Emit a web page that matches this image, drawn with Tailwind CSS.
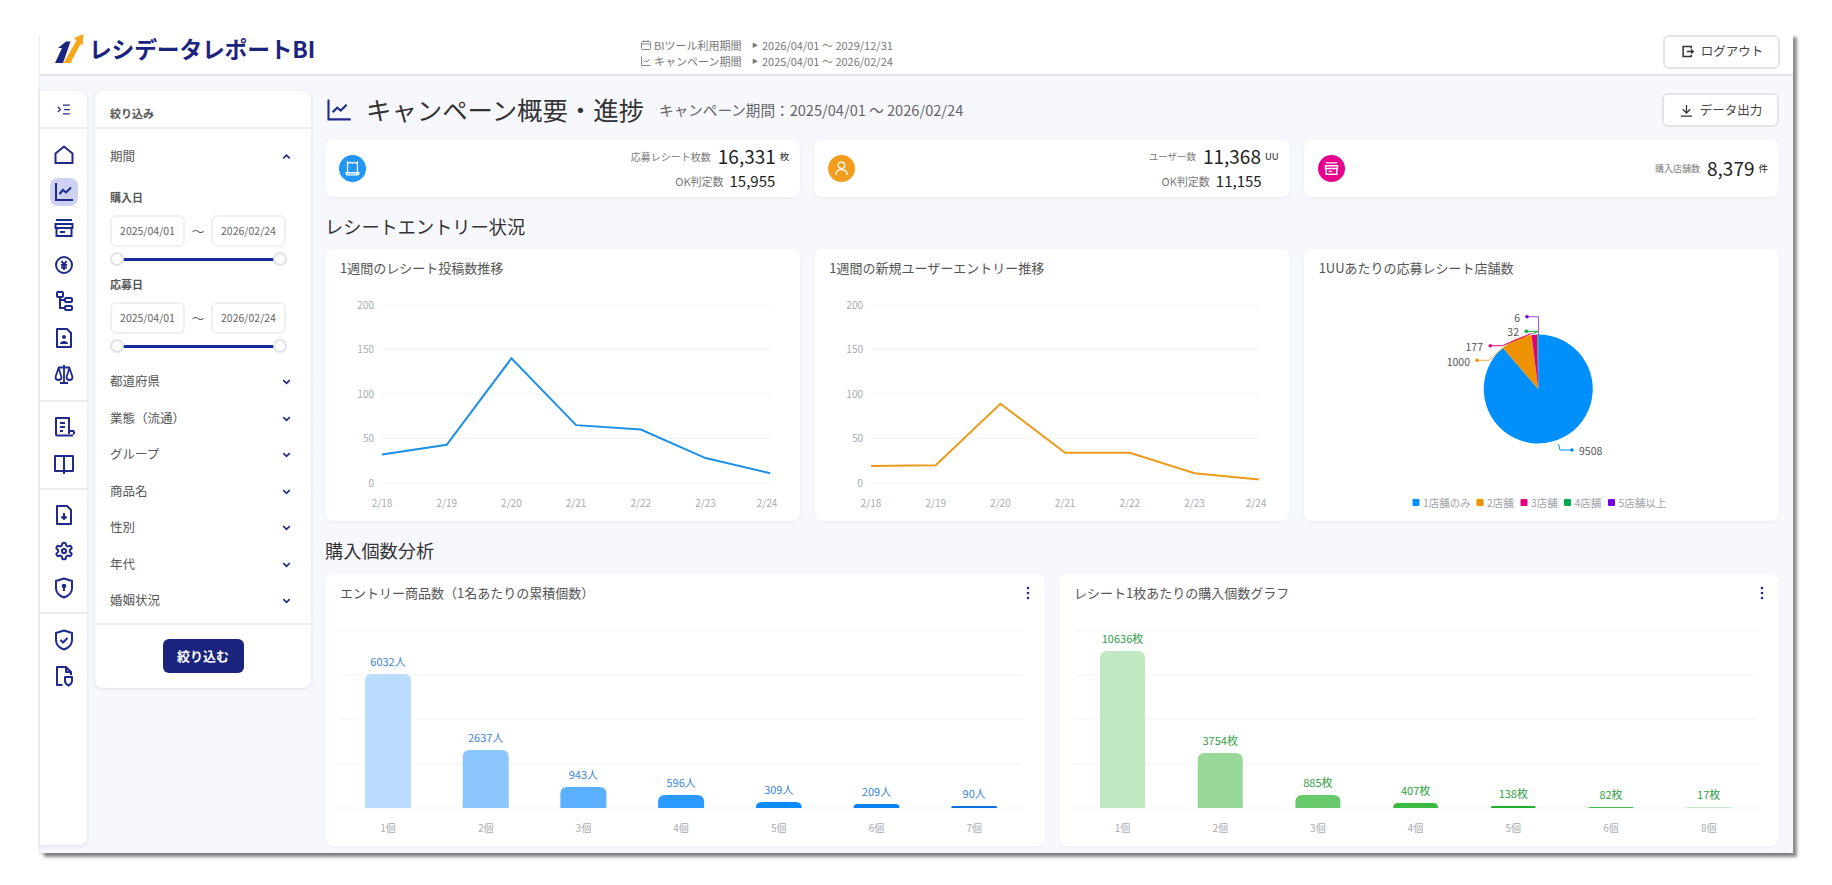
<!DOCTYPE html>
<html lang="ja">
<head>
  <meta charset="UTF-8" />
  <title>レシデータレポートBI</title>
  <script src="https://cdn.jsdelivr.net/npm/@tailwindcss/browser@4"></script>
</head>
<body class="bg-white font-['Noto_Sans_CJK_JP','Noto_Sans',sans-serif] text-[#333]">
 <div class="h-[885px] pt-[33px] pl-[40px]">

  <div class="w-[1753px] h-[820px] bg-[#f7f8fd] flex flex-col shadow-[4px_4px_3px_rgba(0,0,0,0.45),-1px_2px_2px_rgba(0,0,0,0.1)]">

    <!-- header -->
    <header class="h-[43px] shrink-0 bg-white border-b-2 border-[#e4e5ea] flex items-center pl-[15px] pr-[13px]">
      <div class="w-[585px] mb-[9px] flex items-center gap-[4px]">
        <svg class="w-[30px] h-[30px]" viewBox="0 0 30 30"><polygon points="0,29 8,29 15.5,7.5 11,7.5 3,14 7,14" fill="#1a237e"/><polygon points="8.5,29 15.5,29 25.5,10 27.5,12 28.5,0 19,4 21.5,6.5" fill="#f5a81c"/></svg>
        <span class="text-[22.8px] leading-none font-bold text-[#1a237e] tracking-[-0.2px]">レシデータレポートBI</span>
      </div>
      <div class="mb-[2px] text-[11px] leading-[16px] text-[#777] grid grid-cols-[14px_98px_10px_auto] items-center">
        <svg class="w-[12px] h-[12px]" viewBox="0 0 24 24" fill="none" stroke="#888" stroke-width="2"><rect x="3" y="5" width="18" height="16" rx="2"/><path d="M3 10h18M8 2v4M16 2v4"/></svg>
        <span>BIツール利用期間</span><span class="text-[6px]">▶</span><span>2026/04/01 ～ 2029/12/31</span>
        <svg class="w-[12px] h-[12px]" viewBox="0 0 24 24" fill="none" stroke="#888" stroke-width="2"><path d="M3 3v18h18M7 15l4-4 3 3 5-6"/></svg>
        <span>キャンペーン期間</span><span class="text-[6px]">▶</span><span>2025/04/01 ～ 2026/02/24</span>
      </div>
      <button class="ml-auto mb-[4px] w-[117px] h-[34px] bg-white border-2 border-[#e2e4ec] rounded-md flex items-center justify-center gap-[6px] text-[12.5px] text-[#444]">
        <svg class="w-[15px] h-[15px]" viewBox="0 0 24 24" fill="none" stroke="#333" stroke-width="2.4"><path d="M18 7V4H5v16h13v-3M11 12h10M18 9l3 3-3 3"/></svg>ログアウト
      </button>
    </header>

    <div class="flex pt-[15px]">
      <!-- icon rail -->
      <aside class="w-[47px] h-[754px] shrink-0 bg-white rounded-r-lg shadow-[0_1px_4px_rgba(30,40,120,0.12)] flex flex-col items-center text-[#1f2a8c]">
        <div class="w-full h-[38px] flex items-center justify-center border-b-2 border-[#ececf1]">
          <svg class="w-[15px] h-[15px]" viewBox="0 0 24 24" fill="none" stroke="currentColor" stroke-width="2"><path d="M3 8l4 4-4 4M11 5h11M13 12h9M11 19h11"/></svg>
        </div>
        <div class="flex flex-col items-center gap-[12.5px] pt-[14px]">
          <svg class="w-[24px] h-[24px]" viewBox="0 0 24 24" fill="none" stroke="currentColor" stroke-width="2" stroke-linejoin="round"><path d="M3.500 10.500L12 3.500l8.500 7V20h-17z"/></svg>
          <div class="w-[28px] h-[28px] -my-[2px] bg-[#cdd1f4] rounded-lg flex items-center justify-center">
            <svg class="w-[24px] h-[24px]" viewBox="0 0 24 24" fill="none" stroke="currentColor" stroke-width="2"><path d="M4 3v17h17M7.500 14l3.500-4 3 2.500 5-5"/></svg>
          </div>
          <svg class="w-[24px] h-[24px]" viewBox="0 0 24 24" fill="none" stroke="currentColor" stroke-width="2"><path d="M4 4h16M3.500 8h17v4h-17zM4.500 12v8h15v-8M8 16h5"/></svg>
          <svg class="w-[24px] h-[24px]" viewBox="0 0 24 24" fill="none" stroke="currentColor" stroke-width="2"><circle cx="12" cy="12" r="8"/><path d="M9.500 8l2.500 3.500L14.500 8M9 12h6M9 14.500h6M12 11.500V17"/></svg>
          <svg class="w-[24px] h-[24px]" viewBox="0 0 24 24" fill="none" stroke="currentColor" stroke-width="2"><rect x="5" y="3" width="6" height="5" rx="1"/><rect x="13" y="9" width="7" height="4" rx="1"/><rect x="13" y="17" width="7" height="4" rx="1"/><path d="M8 8v11h5M8 11h5"/></svg>
          <svg class="w-[24px] h-[24px]" viewBox="0 0 24 24" fill="none" stroke="currentColor" stroke-width="2" stroke-linejoin="round"><path d="M5 3h10l4 4v14H5z"/><circle cx="12" cy="11" r="2" fill="currentColor" stroke="none"/><path d="M8 18c0-2 2-3 4-3s4 1 4 3z" fill="currentColor" stroke="none"/></svg>
          <svg class="w-[24px] h-[24px]" viewBox="0 0 24 24" fill="none" stroke="currentColor" stroke-width="1.800" stroke-linejoin="round"><path d="M12 3v17M8 21h8M6 5.500h12M6.500 6L3.500 15a3 3 0 0 0 6 0zM17.500 6l-3 9a3 3 0 0 0 6 0z"/></svg>
        </div>
        <div class="w-full h-[2px] bg-[#ececf1] mt-[14px]"></div>
        <div class="flex flex-col items-center gap-[12.5px] pt-[13px]">
          <svg class="w-[24px] h-[24px]" viewBox="0 0 24 24" fill="none" stroke="currentColor" stroke-width="2" stroke-linejoin="round"><path d="M21 20.500H5a1 1 0 0 1-1-1V3h13v16M8 8h5M8 12h5M8 16h3M17 16h3a1.500 1.500 0 0 1 1 3"/></svg>
          <svg class="w-[24px] h-[24px]" viewBox="0 0 24 24" fill="none" stroke="currentColor" stroke-width="2" stroke-linejoin="round"><path d="M3 4h18v15H3zM12 4v18"/></svg>
        </div>
        <div class="w-full h-[2px] bg-[#ececf1] mt-[12px]"></div>
        <div class="flex flex-col items-center gap-[12.5px] pt-[13px]">
          <svg class="w-[24px] h-[24px]" viewBox="0 0 24 24" fill="none" stroke="currentColor" stroke-width="2" stroke-linejoin="round"><path d="M5 3h10l4 4v14H5zM12 10v6M9.500 13.500L12 16l2.500-2.500"/></svg>
          <svg class="w-[24px] h-[24px] p-[2px]" viewBox="0 0 24 24" fill="none" stroke="currentColor" stroke-width="2.400"><path d="M12.220 2h-.44a2 2 0 0 0-2 2v.18a2 2 0 0 1-1 1.730l-.43.25a2 2 0 0 1-2 0l-.15-.08a2 2 0 0 0-2.730.73l-.22.38a2 2 0 0 0 .73 2.730l.15.1a2 2 0 0 1 1 1.720v.51a2 2 0 0 1-1 1.740l-.15.09a2 2 0 0 0-.73 2.730l.22.38a2 2 0 0 0 2.730.73l.15-.08a2 2 0 0 1 2 0l.43.25a2 2 0 0 1 1 1.730V20a2 2 0 0 0 2 2h.44a2 2 0 0 0 2-2v-.18a2 2 0 0 1 1-1.730l.43-.25a2 2 0 0 1 2 0l.15.08a2 2 0 0 0 2.730-.73l.22-.39a2 2 0 0 0-.73-2.730l-.15-.08a2 2 0 0 1-1-1.740v-.5a2 2 0 0 1 1-1.740l.15-.09a2 2 0 0 0 .73-2.730l-.22-.38a2 2 0 0 0-2.730-.73l-.15.08a2 2 0 0 1-2 0l-.43-.25a2 2 0 0 1-1-1.730V4a2 2 0 0 0-2-2z"/><circle cx="12" cy="12" r="2.500"/></svg>
          <svg class="w-[24px] h-[24px]" viewBox="0 0 24 24" fill="none" stroke="currentColor" stroke-width="2" stroke-linejoin="round"><path d="M12 2.500L4 5v7c0 5 3.500 8 8 9.500 4.500-1.500 8-4.500 8-9.500V5z"/><circle cx="12" cy="10" r="1.300" fill="currentColor"/><path d="M12 11v4"/></svg>
        </div>
        <div class="w-full h-[2px] bg-[#ececf1] mt-[12px]"></div>
        <div class="flex flex-col items-center gap-[12.5px] pt-[14px]">
          <svg class="w-[24px] h-[24px]" viewBox="0 0 24 24" fill="none" stroke="currentColor" stroke-width="2" stroke-linejoin="round"><path d="M12 2.500L4 5v7c0 5 3.500 8 8 9.500 4.500-1.500 8-4.500 8-9.500V5z"/><path d="M8.500 12l2.500 2.500 4.500-4.500"/></svg>
          <svg class="w-[24px] h-[24px]" viewBox="0 0 24 24" fill="none" stroke="currentColor" stroke-width="2" stroke-linejoin="round"><path d="M10.500 21H5V3h9l5 5v3M14 3v5h5M13 13h7v4c0 2.500-1.500 3.500-3.500 4.500-2-1-3.500-2-3.500-4.500z"/></svg>
        </div>
      </aside>

      <!-- filter panel -->
      <aside class="ml-[8px] w-[216px] h-[597px] shrink-0 bg-white rounded-lg shadow-[0_1px_4px_rgba(30,40,120,0.12)] flex flex-col text-[#555]">
        <div class="h-[38px] px-[15px] flex items-end pb-[6px] border-b-2 border-[#ececf1] text-[11px] font-bold leading-[16px]">絞り込み</div>
        <div class="px-[15px]">
          <div class="h-[54px] flex items-center justify-between pr-[4px] text-[12.5px]">
            <span>期間</span>
            <svg class="w-[11px] h-[11px]" viewBox="0 0 24 24" fill="none" stroke="#1f2a8c" stroke-width="3.500"><path d="M5 16l7-7 7 7"/></svg>
          </div>
          <div class="text-[11px] font-bold leading-[16px] mt-[6px]">購入日</div>
          <div class="flex items-center justify-between w-[176px] mt-[10px] text-[10.5px] text-[#666]">
            <div class="w-[75px] h-[32px] border-2 border-[#eef0f4] rounded-md flex items-center justify-center">2025/04/01</div>
            <span class="text-[13px]">～</span>
            <div class="w-[75px] h-[32px] border-2 border-[#eef0f4] rounded-md flex items-center justify-center">2026/02/24</div>
          </div>
          <div class="relative w-[177px] h-[14px] mt-[5px] flex items-center px-[7px]">
            <div class="w-full h-[3px] bg-[#1a2a9c]"></div>
            <div class="absolute left-0 top-0 w-[14px] h-[14px] rounded-full bg-white border-2 border-[#dfe2e8]"></div>
            <div class="absolute right-0 top-0 w-[14px] h-[14px] rounded-full bg-white border-2 border-[#dfe2e8]"></div>
          </div>
          <div class="text-[11px] font-bold leading-[16px] mt-[10px]">応募日</div>
          <div class="flex items-center justify-between w-[176px] mt-[10px] text-[10.5px] text-[#666]">
            <div class="w-[75px] h-[32px] border-2 border-[#eef0f4] rounded-md flex items-center justify-center">2025/04/01</div>
            <span class="text-[13px]">～</span>
            <div class="w-[75px] h-[32px] border-2 border-[#eef0f4] rounded-md flex items-center justify-center">2026/02/24</div>
          </div>
          <div class="relative w-[177px] h-[14px] mt-[5px] flex items-center px-[7px]">
            <div class="w-full h-[3px] bg-[#1a2a9c]"></div>
            <div class="absolute left-0 top-0 w-[14px] h-[14px] rounded-full bg-white border-2 border-[#dfe2e8]"></div>
            <div class="absolute right-0 top-0 w-[14px] h-[14px] rounded-full bg-white border-2 border-[#dfe2e8]"></div>
          </div>
          <div class="mt-[10.5px] text-[12.5px]">
            <div class="h-[36.5px] flex items-center justify-between pr-[4px]"><span>都道府県</span><svg class="w-[11px] h-[11px]" viewBox="0 0 24 24" fill="none" stroke="#1f2a8c" stroke-width="3.500"><path d="M5 9l7 7 7-7"/></svg></div>
            <div class="h-[36.5px] flex items-center justify-between pr-[4px]"><span>業態（流通）</span><svg class="w-[11px] h-[11px]" viewBox="0 0 24 24" fill="none" stroke="#1f2a8c" stroke-width="3.500"><path d="M5 9l7 7 7-7"/></svg></div>
            <div class="h-[36.5px] flex items-center justify-between pr-[4px]"><span>グループ</span><svg class="w-[11px] h-[11px]" viewBox="0 0 24 24" fill="none" stroke="#1f2a8c" stroke-width="3.500"><path d="M5 9l7 7 7-7"/></svg></div>
            <div class="h-[36.5px] flex items-center justify-between pr-[4px]"><span>商品名</span><svg class="w-[11px] h-[11px]" viewBox="0 0 24 24" fill="none" stroke="#1f2a8c" stroke-width="3.500"><path d="M5 9l7 7 7-7"/></svg></div>
            <div class="h-[36.5px] flex items-center justify-between pr-[4px]"><span>性別</span><svg class="w-[11px] h-[11px]" viewBox="0 0 24 24" fill="none" stroke="#1f2a8c" stroke-width="3.500"><path d="M5 9l7 7 7-7"/></svg></div>
            <div class="h-[36.5px] flex items-center justify-between pr-[4px]"><span>年代</span><svg class="w-[11px] h-[11px]" viewBox="0 0 24 24" fill="none" stroke="#1f2a8c" stroke-width="3.500"><path d="M5 9l7 7 7-7"/></svg></div>
            <div class="h-[36.5px] flex items-center justify-between pr-[4px]"><span>婚姻状況</span><svg class="w-[11px] h-[11px]" viewBox="0 0 24 24" fill="none" stroke="#1f2a8c" stroke-width="3.500"><path d="M5 9l7 7 7-7"/></svg></div>
          </div>
        </div>
        <div class="mt-[4px] border-t-2 border-[#ececf1] flex justify-center pt-[14px]">
          <button class="w-[81px] h-[34px] bg-[#1a237e] rounded-md text-white text-[13px] font-bold">絞り込む</button>
        </div>
      </aside>

      <!-- main -->
      <main class="ml-[14px] w-[1454px]">
        <div class="h-[49px] flex items-start">
          <div class="h-[38px] flex items-center">
            <svg class="w-[28px] h-[28px]" viewBox="0 0 24 24" fill="none" stroke="#1f2a8c" stroke-width="1.800"><path d="M3 3v17h19M6.500 14l4-4 3 2.500 5-5"/></svg>
            <h1 class="ml-[13px] text-[25.4px] leading-none font-normal text-[#333]">キャンペーン概要・進捗</h1>
            <span class="ml-[15px] text-[14.6px] text-[#666]">キャンペーン期間：2025/04/01 ～ 2026/02/24</span>
          </div>
          <button class="ml-auto mt-[2px] w-[117px] h-[34px] bg-white border-2 border-[#e2e4ec] rounded-md flex items-center justify-center gap-[6px] text-[12.5px] text-[#444]">
            <svg class="w-[15px] h-[15px]" viewBox="0 0 24 24" fill="none" stroke="#333" stroke-width="2"><path d="M12 3v12M6 10l6 6 6-6M3 21h18"/></svg>データ出力
          </button>
        </div>

        <!-- KPI cards -->
        <div class="grid grid-cols-3 gap-[14px] h-[57px]">
          <div class="bg-white rounded-lg shadow-[0_1px_3px_rgba(30,40,120,0.06)] flex items-center justify-between pl-[14px] pr-[11px]">
            <div class="w-[27px] h-[27px] rounded-full bg-[#2196f3] flex items-center justify-center">
              <svg class="w-[17px] h-[17px]" viewBox="0 0 24 24" fill="none" stroke="#fff" stroke-width="1.800"><path d="M5 3l2 1.500L9.500 3 12 4.500 14.500 3 17 4.500 19 3v15H5zM3 18h15v3H5a2 2 0 0 1-2-2zM18 18h3v1a2 2 0 0 1-2 2"/></svg>
            </div>
            <div class="flex flex-col items-end text-[#222]">
              <div class="flex items-center h-[26px]"><span class="text-[10px] text-[#777] mr-[7px]">応募レシート枚数</span><span class="text-[19px]">16,331</span><span class="text-[9.5px] ml-[4px]">枚</span></div>
              <div class="flex items-center h-[24px] pr-[14px]"><span class="text-[11px] text-[#777] mr-[6px]">OK判定数</span><span class="text-[15px]">15,955</span></div>
            </div>
          </div>
          <div class="bg-white rounded-lg shadow-[0_1px_3px_rgba(30,40,120,0.06)] flex items-center justify-between pl-[14px] pr-[11px]">
            <div class="w-[27px] h-[27px] rounded-full bg-[#f39c1f] flex items-center justify-center">
              <svg class="w-[17px] h-[17px]" viewBox="0 0 24 24" fill="none" stroke="#fff" stroke-width="1.800"><circle cx="12" cy="7.500" r="4.500"/><path d="M4 21c0-5 3.500-7.500 8-7.500s8 2.500 8 7.500"/></svg>
            </div>
            <div class="flex flex-col items-end text-[#222]">
              <div class="flex items-center h-[26px]"><span class="text-[9.5px] text-[#777] mr-[7px]">ユーザー数</span><span class="text-[19px]">11,368</span><span class="text-[9.5px] ml-[4px]">UU</span></div>
              <div class="flex items-center h-[24px] pr-[17px]"><span class="text-[11px] text-[#777] mr-[6px]">OK判定数</span><span class="text-[15px]">11,155</span></div>
            </div>
          </div>
          <div class="bg-white rounded-lg shadow-[0_1px_3px_rgba(30,40,120,0.06)] flex items-center justify-between pl-[14px] pr-[11px]">
            <div class="w-[27px] h-[27px] rounded-full bg-[#e6008c] flex items-center justify-center">
              <svg class="w-[17px] h-[17px]" viewBox="0 0 24 24" fill="none" stroke="#fff" stroke-width="2"><path d="M4 4h16M3.500 8h17v4h-17zM4.500 12v8h15v-8M8 16h5"/></svg>
            </div>
            <div class="flex items-center text-[#222]"><span class="text-[9px] text-[#777] mr-[7px]">購入店舗数</span><span class="text-[19px]">8,379</span><span class="text-[9.5px] ml-[4px]">件</span></div>
          </div>
        </div>

        <h2 class="h-[52px] flex items-center pt-[7px] text-[18.2px] font-normal text-[#333]">レシートエントリー状況</h2>
        <div class="grid grid-cols-3 gap-[14px] h-[272px]">
          <section class="bg-white rounded-lg shadow-[0_1px_3px_rgba(30,40,120,0.06)]">
            <h3 class="h-[37px] flex items-center px-[15px] text-[13px] font-normal text-[#555]">1週間のレシート投稿数推移</h3>
            <svg id="line1" class="block w-[475px] h-[235px]" viewBox="325 286 475 235"></svg>
          </section>
          <section class="bg-white rounded-lg shadow-[0_1px_3px_rgba(30,40,120,0.06)]">
            <h3 class="h-[37px] flex items-center px-[15px] text-[13px] font-normal text-[#555]">1週間の新規ユーザーエントリー推移</h3>
            <svg id="line2" class="block w-[475px] h-[235px]" viewBox="814 286 475 235"></svg>
          </section>
          <section class="bg-white rounded-lg shadow-[0_1px_3px_rgba(30,40,120,0.06)]">
            <h3 class="h-[37px] flex items-center px-[15px] text-[13px] font-normal text-[#555]">1UUあたりの応募レシート店舗数</h3>
            <svg class="block w-[475px] h-[235px]" viewBox="1304 286 475 235" font-size="10.500">
              <g transform="translate(1538.300 389)">
                <path d="M0 0L-35.600 -41.300A54.500 54.500 0 1 0 0 -54.500z" fill="#008ffb"/>
                <path d="M0 0L-6.800 -54.070A54.500 54.500 0 0 0 -35.600 -41.300z" fill="#ee9200"/>
                <path d="M0 0L-1.200 -54.490A54.500 54.500 0 0 0 -6.800 -54.070z" fill="#e0007f"/>
                <path d="M0 0L-0.200 -54.500A54.500 54.500 0 0 0 -1.200 -54.490z" fill="#00a84f"/>
                <path d="M0 0L0 -54.500A54.500 54.500 0 0 0 -0.200 -54.500z" fill="#7a00e0"/>
              </g>
              <g fill="none" stroke-width="1">
                <path d="M1526.300 331.300h12l-6 2.500" stroke="#12a82a"/>
                <path d="M1527 316.700h11.500v18" stroke="#a64de8"/>
                <path d="M1477 360.300h12l13.300 -12l14 -10" stroke="#f5b04a"/>
                <path d="M1490.300 345.700h12l29.500 -12.500" stroke="#e0007f"/>
                <path d="M1572 450h-12l-1.500 -6" stroke="#008ffb"/>
              </g>
              <circle cx="1527" cy="316.700" r="1.800" fill="#7a00e0"/><circle cx="1526.300" cy="331.300" r="1.800" fill="#00a84f"/><circle cx="1490.300" cy="345.700" r="1.800" fill="#e0007f"/><circle cx="1477" cy="360.300" r="1.800" fill="#ee9200"/><circle cx="1572" cy="450" r="1.800" fill="#008ffb"/>
              <g fill="#555" text-anchor="end">
                <text x="1520" y="321.500">6</text><text x="1519" y="336">32</text><text x="1483" y="351">177</text><text x="1470" y="365.500">1000</text>
              </g>
              <text x="1579" y="455" fill="#555">9508</text>
              <g fill="#a0a3ab">
                <rect x="1412.500" y="499" width="7" height="7" rx="1" fill="#008ffb"/><text x="1423" y="506.500">1店舗のみ</text>
                <rect x="1476.500" y="499" width="7" height="7" rx="1" fill="#ee9200"/><text x="1487" y="506.500">2店舗</text>
                <rect x="1520.500" y="499" width="7" height="7" rx="1" fill="#e0007f"/><text x="1531" y="506.500">3店舗</text>
                <rect x="1564" y="499" width="7" height="7" rx="1" fill="#00a84f"/><text x="1574.500" y="506.500">4店舗</text>
                <rect x="1608" y="499" width="7" height="7" rx="1" fill="#7a00e0"/><text x="1618.500" y="506.500">5店舗以上</text>
              </g>
            </svg>
          </section>
        </div>

        <h2 class="h-[53px] flex items-center pt-[6px] text-[18.2px] font-normal text-[#333]">購入個数分析</h2>
        <div class="grid grid-cols-2 gap-[14px] h-[272px]">
          <section class="bg-white rounded-lg shadow-[0_1px_3px_rgba(30,40,120,0.06)]">
            <div class="h-[37px] flex items-center justify-between pl-[15px] pr-[15px]">
              <h3 class="text-[13px] font-normal text-[#555]">エントリー商品数（1名あたりの累積個数）</h3>
              <svg class="w-[4px] h-[14px]" viewBox="0 0 4 14" fill="#1f2a8c"><circle cx="2" cy="2" r="1.300"/><circle cx="2" cy="7" r="1.300"/><circle cx="2" cy="12" r="1.300"/></svg>
            </div>
            <svg id="bars1" class="block w-[720px] h-[235px]" viewBox="325 611 720 235"></svg>
          </section>
          <section class="bg-white rounded-lg shadow-[0_1px_3px_rgba(30,40,120,0.06)]">
            <div class="h-[37px] flex items-center justify-between pl-[15px] pr-[15px]">
              <h3 class="text-[13px] font-normal text-[#555]">レシート1枚あたりの購入個数グラフ</h3>
              <svg class="w-[4px] h-[14px]" viewBox="0 0 4 14" fill="#1f2a8c"><circle cx="2" cy="2" r="1.300"/><circle cx="2" cy="7" r="1.300"/><circle cx="2" cy="12" r="1.300"/></svg>
            </div>
            <svg id="bars2" class="block w-[720px] h-[235px]" viewBox="1059 611 720 235"></svg>
          </section>
        </div>
      </main>
    </div>
  </div>
 </div>

  <script>
    const days = ["2/18", "2/19", "2/20", "2/21", "2/22", "2/23", "2/24"];

    function lineChart(id, x0, color, values) {
      const step = 64.7;
      const yOf = v => 483 - v * 0.89;
      let s = "";
      [200, 150, 100, 50, 0].forEach(v => {
        s += `<line x1="${x0}" x2="${x0 + 388}" y1="${yOf(v)}" y2="${yOf(v)}" stroke="#f3f4f6"/>`;
        s += `<text x="${x0 - 8}" y="${yOf(v) + 3.5}" font-size="10" text-anchor="end" fill="#a8abb2">${v}</text>`;
      });
      days.forEach((d, i) => {
        const x = Math.min(x0 + i * step, x0 + 385);
        s += `<text x="${x}" y="507" font-size="10" text-anchor="middle" fill="#a8abb2">${d}</text>`;
      });
      const pts = values.map((v, i) => `${x0 + i * step},${yOf(v)}`).join(" ");
      s += `<polyline points="${pts}" fill="none" stroke="${color}" stroke-width="2"/>`;
      document.getElementById(id).innerHTML = s;
    }

    function barChart(id, gx1, gx2, barX, barW, labelColor, bars) {
      let s = "";
      [630, 675, 719, 764, 808].forEach(y => {
        s += `<line x1="${gx1}" x2="${gx2}" y1="${y}" y2="${y}" stroke="#f1f2f5"/>`;
      });
      bars.forEach((b, i) => {
        const x = barX + i * 97.7;
        const r = Math.min(7, 808 - b.top);
        s += `<path d="M${x} 808V${b.top + r}Q${x} ${b.top} ${x + r} ${b.top}H${x + barW - r}Q${x + barW} ${b.top} ${x + barW} ${b.top + r}V808z" fill="${b.color}"/>`;
        s += `<text x="${x + barW / 2}" y="${b.top - 8}" font-size="11" text-anchor="middle" fill="${labelColor}">${b.label}</text>`;
        s += `<text x="${x + barW / 2}" y="832" font-size="10" text-anchor="middle" fill="#a8abb2">${b.name}</text>`;
      });
      document.getElementById(id).innerHTML = s;
    }

    lineChart("line1", 382, "#1a90e8", [32, 43, 140, 65, 60, 28, 11]);
    lineChart("line2", 871, "#ee9a1a", [19, 20, 89, 34, 34, 11, 4]);

    barChart("bars1", 339, 1023, 365, 46, "#3d85d8", [
      { top: 674, color: "#b9dcff", label: "6032人", name: "1個" },
      { top: 750, color: "#8bc6ff", label: "2637人", name: "2個" },
      { top: 787, color: "#5ab0ff", label: "943人", name: "3個" },
      { top: 795, color: "#2b9aff", label: "596人", name: "4個" },
      { top: 802, color: "#0a8cff", label: "309人", name: "5個" },
      { top: 804, color: "#0a80f5", label: "209人", name: "6個" },
      { top: 806, color: "#0a6fe0", label: "90人", name: "7個" },
    ]);
    barChart("bars2", 1074, 1757, 1100, 45, "#2f9e3f", [
      { top: 651, color: "#c2e8c2", label: "10636枚", name: "1個" },
      { top: 753, color: "#97d898", label: "3754枚", name: "2個" },
      { top: 795, color: "#68c96c", label: "885枚", name: "3個" },
      { top: 803, color: "#3cbb44", label: "407枚", name: "4個" },
      { top: 806, color: "#1fb02f", label: "138枚", name: "5個" },
      { top: 807, color: "#46b84e", label: "82枚", name: "6個" },
      { top: 807, color: "#c7e9c9", label: "17枚", name: "8個" },
    ]);
  </script>
</body>
</html>
